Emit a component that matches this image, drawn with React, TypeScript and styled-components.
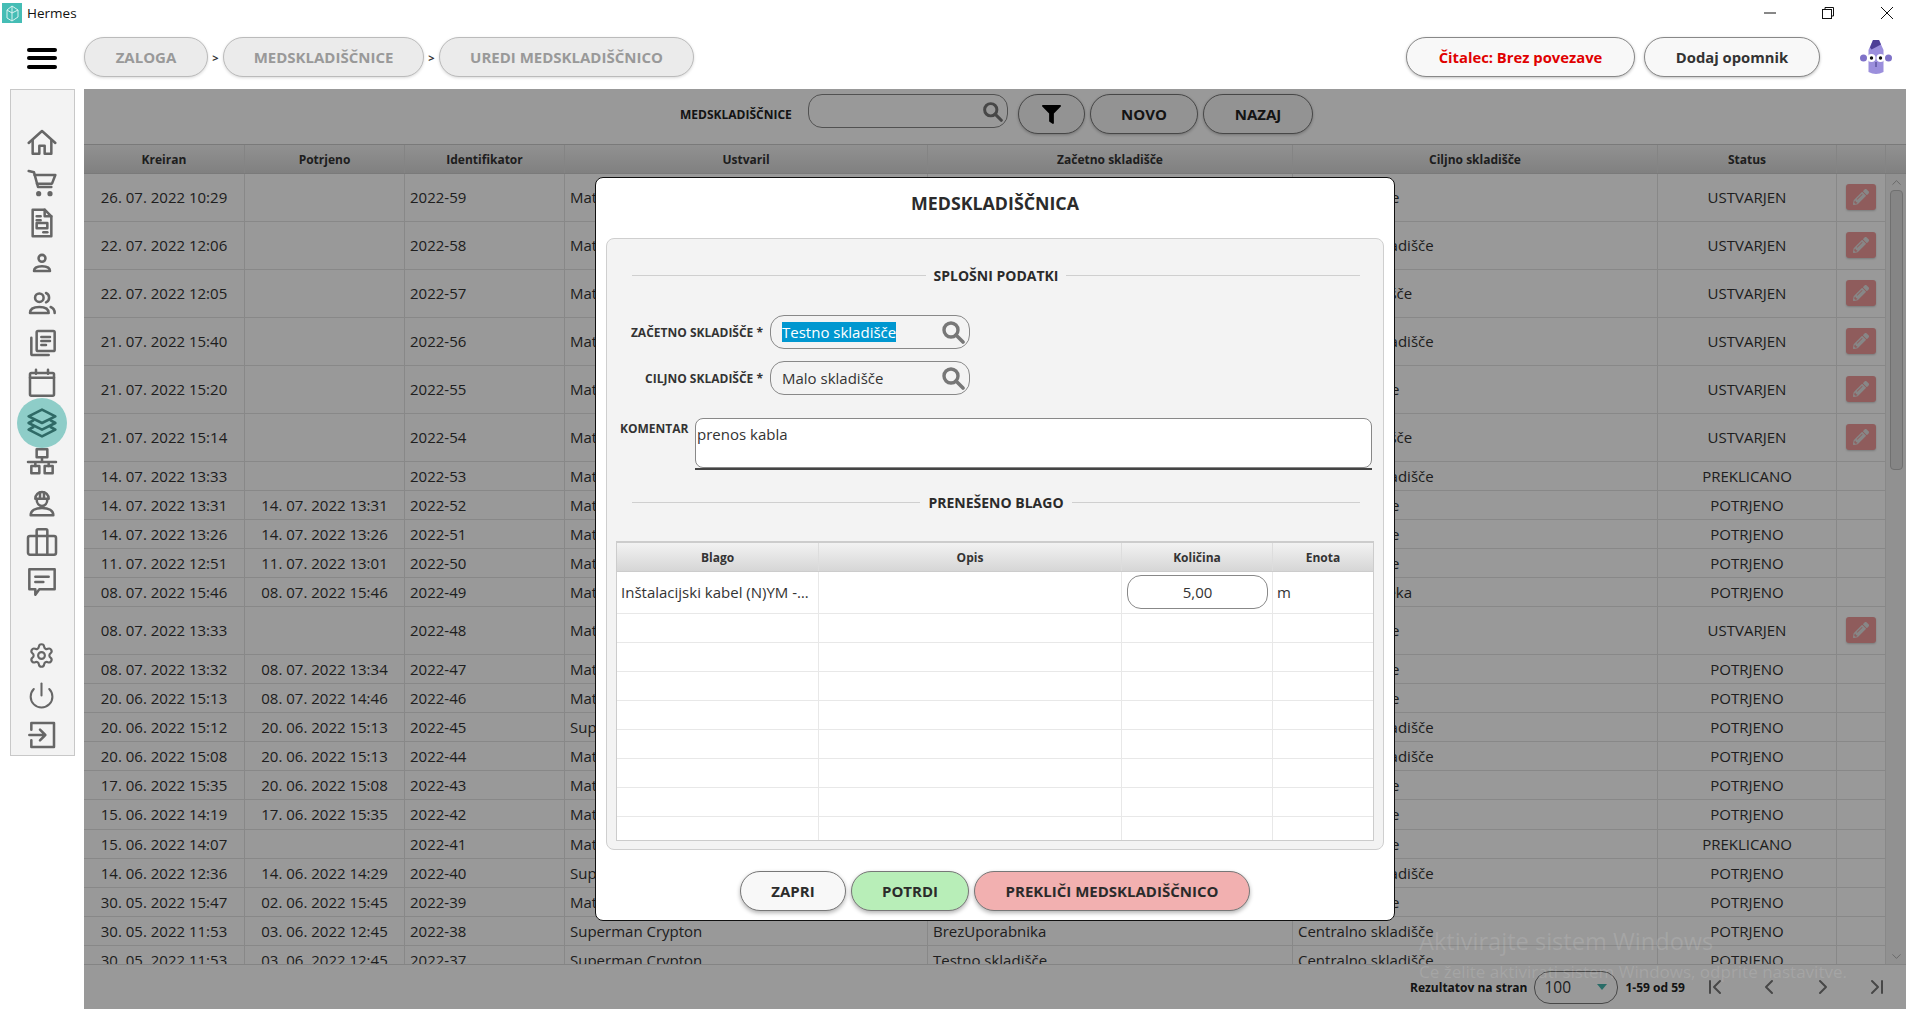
import React from "react";
import styled, { createGlobalStyle } from "styled-components";
import { ChevronDown, ChevronFirst, ChevronLast, ChevronLeft, ChevronRight, ChevronUp, Power, Settings } from "lucide-react";
import { FaFilter, FaPencilAlt } from "react-icons/fa";

const GlobalStyle = createGlobalStyle`
  html, body {
    margin: 0;
    padding: 0;
    background: #fff;
  }
  body {
    width: 1920px;
    height: 1026px;
    overflow: hidden;
    font-family: "Open Sans", "Liberation Sans", sans-serif;
    color: #333;
  }
  * {
    box-sizing: border-box;
  }
`;

const Page = styled.div`
  position: relative;
  width: 1920px;
  height: 1026px;
`;

const TitleBar = styled.div`
  display: flex;
  align-items: center;
  height: 30px;
  padding: 0 0 4px 2px;
  font-size: 13.5px;
  color: #111;
`;

const AppName = styled.span`
  margin-left: 5px;
`;

const WindowControls = styled.div`
  display: flex;
  margin-left: auto;
  width: 157px;
  justify-content: space-between;
  padding-right: 25px;
  align-items: center;
`;

const TopBar = styled.div`
  display: flex;
  align-items: center;
  height: 59px;
  padding: 7px 0 12px 27px;
`;

const Burger = styled.div`
  display: flex;
  flex-direction: column;
  gap: 4.5px;
  width: 30px;
  margin-right: 27px;
  margin-top: 2px;
  span {
    height: 4px;
    border-radius: 2px;
    background: #000;
  }
`;

const Crumb = styled.div<{ $w: number }>`
  display: flex;
  align-items: center;
  justify-content: center;
  height: 40px;
  border: 1px solid #bbb;
  border-radius: 20px;
  background: #ebebeb;
  box-shadow: 0 1px 3px rgba(0, 0, 0, 0.15);
  color: #999;
  font-size: 15px;
  font-weight: 700;
  width: ${(p) => p.$w}px;
`;

const CrumbSep = styled.span`
  width: 15px;
  text-align: center;
  font-size: 11px;
  font-weight: 700;
  color: #333;
`;

const TopActions = styled.div`
  display: flex;
  align-items: center;
  margin-left: auto;
`;

const Pill = styled.div<{ $w: number; $color?: string }>`
  display: flex;
  align-items: center;
  justify-content: center;
  height: 40px;
  width: ${(p) => p.$w}px;
  margin-right: 9px;
  border: 1px solid #888;
  border-radius: 20px;
  background: #f8f8f8;
  box-shadow: 0 1px 3px rgba(0, 0, 0, 0.25);
  font-size: 14.8px;
  font-weight: 700;
  color: ${(p) => p.$color || "#333"};
`;

const Mascot = styled.svg`
  margin: 0 28px 0 31px;
`;

const Main = styled.div`
  display: flex;
  align-items: flex-start;
`;

const Sidebar = styled.nav`
  display: flex;
  flex-direction: column;
  align-items: center;
  width: 65px;
  height: 667px;
  margin-left: 10px;
  padding: 33px 2px 0 0;
  border: 1px solid #c8c8c8;
  background: #f3f3f3;
`;

const NavSpacer = styled.div`
  height: 33px;
`;

const NavItem = styled.div<{ $active?: boolean }>`
  display: flex;
  align-items: center;
  justify-content: center;
  width: 50px;
  height: 40px;
  position: relative;
  color: ${(p) => (p.$active ? "#2f6a66" : "#666")};
  z-index: 0;
  &::before {
    content: "";
    display: ${(p) => (p.$active ? "block" : "none")};
    position: absolute;
    left: 0;
    top: -5px;
    width: 50px;
    height: 50px;
    border-radius: 50%;
    background: #8ecdc8;
    z-index: -1;
  }
`;

const NavSvg = styled.svg<{ $thick?: boolean }>`
  width: 32px;
  height: 32px;
  fill: none;
  stroke: currentColor;
  stroke-width: ${(p) => (p.$thick ? 2 : 1.9)};
  stroke-linejoin: round;
  stroke-linecap: round;
`;

const Panel = styled.section`
  position: relative;
  width: 1822px;
  height: 920px;
  margin-left: 9px;
  background: #fff;
`;

const Overlay = styled.div`
  position: absolute;
  inset: 0;
  background: rgba(0, 0, 0, 0.4);
`;

const Toolbar = styled.div`
  display: flex;
  align-items: flex-start;
  height: 55px;
  padding: 5px 0 0 596px;
`;

const ToolbarLabel = styled.span`
  width: 128px;
  margin-top: 12px;
  font-size: 12px;
  font-weight: 700;
  color: #222;
`;

const SearchField = styled.div<{ $w: number; $bg?: string }>`
  display: flex;
  align-items: center;
  justify-content: space-between;
  height: 34px;
  width: ${(p) => p.$w}px;
  padding: 0 4px 0 11px;
  border: 1px solid #888;
  border-radius: 14px;
  background: ${(p) => p.$bg || "#f3f3f3"};
  font-size: 15px;
  color: #333;
`;

const ToolGroup = styled.div`
  display: flex;
  gap: 5px;
  margin-left: 10px;
`;

const ToolButton = styled.div<{ $w: number }>`
  display: flex;
  align-items: center;
  justify-content: center;
  width: ${(p) => p.$w}px;
  height: 40px;
  border: 1px solid #777;
  border-radius: 20px;
  background: #f6f6f6;
  box-shadow: 0 1px 3px rgba(0, 0, 0, 0.25);
  font-size: 15px;
  font-weight: 700;
  color: #222;
`;

const HeaderRow = styled.div<{ $cols: string; $h: number }>`
  display: grid;
  grid-template-columns: ${(p) => p.$cols};
  height: ${(p) => p.$h}px;
  background: linear-gradient(#f2f2f2, #d6d6d6);
  border-top: 1px solid #ccc;
  border-bottom: 1px solid #ccc;
`;

const HeaderCell = styled.div`
  display: flex;
  align-items: center;
  justify-content: center;
  padding-top: 1px;
  border-right: 1px solid #ddd;
  font-size: 12px;
  font-weight: 700;
  color: #333;
  &:last-child {
    border-right: none;
  }
`;

const TableBody = styled.div`
  display: flex;
  height: 790px;
  overflow: hidden;
`;

const Rows = styled.div`
  width: 1802px;
`;

const RowBox = styled.div<{ $tall?: boolean }>`
  display: grid;
  grid-template-columns: 161px 160px 160px 363px 365px 365px 179px 49px;
  height: ${(p) => (p.$tall ? 48 : 29.05)}px;
  border-bottom: 1px solid #e3e3e3;
  && > * {
    padding-bottom: ${(p) => (p.$tall ? 2 : 0)}px;
  }
`;

const Cell = styled.div<{ $center?: boolean }>`
  display: flex;
  align-items: center;
  justify-content: ${(p) => (p.$center ? "center" : "flex-start")};
  padding: ${(p) => (p.$center ? "0" : "0 5px")};
  border-right: 1px solid #e3e3e3;
  font-size: 15px;
  white-space: nowrap;
  overflow: hidden;
  color: #333;
`;

const EditButton = styled.div`
  display: flex;
  align-items: center;
  justify-content: center;
  width: 30px;
  height: 26px;
  border-radius: 3px;
  background: #ef9a9a;
  box-shadow: 0 1px 2px rgba(0, 0, 0, 0.2);
  color: #e2e2e2;
`;

const Scrollbar = styled.div`
  display: flex;
  flex-direction: column;
  align-items: center;
  width: 20px;
  background: #f2f2f2;
  color: #888;
`;

const ScrollArrow = styled.div`
  display: flex;
  align-items: center;
  justify-content: center;
  height: 16px;
`;

const ScrollThumb = styled.div`
  width: 13px;
  height: 280px;
  margin-bottom: auto;
  border: 1px solid #bbb;
  border-radius: 4px;
  background: #dedede;
`;

const Footer = styled.div`
  display: flex;
  align-items: center;
  height: 45px;
  padding-left: 1326px;
  border-top: 1px solid #ddd;
  font-size: 12px;
  font-weight: 700;
  color: #222;
`;

const PageSelect = styled.div`
  display: flex;
  align-items: center;
  justify-content: space-between;
  width: 84px;
  height: 33px;
  margin: 0 7px;
  padding: 0 10px 0 9px;
  border: 1px solid #777;
  border-radius: 16px;
  font-size: 15.5px;
  font-weight: 400;
  color: #333;
`;

const Triangle = styled.span`
  width: 0;
  height: 0;
  border-left: 5px solid transparent;
  border-right: 5px solid transparent;
  border-top: 6px solid #45b5ac;
`;

const Pager = styled.div`
  display: flex;
  align-items: center;
  gap: 30px;
  margin-left: 18px;
  color: #777;
`;

const Modal = styled.div`
  position: absolute;
  left: 511px;
  top: 88px;
  width: 800px;
  height: 744px;
  padding-left: 10px;
  border: 1px solid #111;
  border-radius: 8px;
  background: #fff;
`;

const ModalTitle = styled.h2`
  display: flex;
  align-items: center;
  justify-content: center;
  height: 60px;
  margin: 0;
  padding: 0 10px 10px 0;
  font-size: 17.8px;
  font-weight: 700;
  color: #2b2b2b;
`;

const FormPanel = styled.div`
  width: 778px;
  height: 612px;
  padding: 0 9px;
  border: 1px solid #cfcfcf;
  border-radius: 8px;
  background: #f3f3f3;
`;

const SectionTitle = styled.div<{ $top: number }>`
  display: flex;
  align-items: center;
  gap: 8px;
  height: 20px;
  margin: ${(p) => p.$top}px 14px 0 16px;
  font-size: 14px;
  font-weight: 700;
  color: #2b2b2b;
  &::before,
  &::after {
    content: "";
    flex: 1;
    height: 1px;
    background: #cfcfcf;
  }
`;

const FormRow = styled.div<{ $top: number }>`
  display: flex;
  align-items: center;
  margin-top: ${(p) => p.$top}px;
`;

const FieldLabel = styled.label`
  width: 147px;
  margin-right: 7px;
  text-align: right;
  font-size: 12px;
  font-weight: 700;
  color: #333;
  white-space: nowrap;
`;

const Selected = styled.span`
  background: #0097d0;
  color: #fff;
`;

const CommentRow = styled.div`
  display: flex;
  align-items: flex-start;
  margin-top: 23px;
  padding-left: 4px;
`;

const CommentLabel = styled.label`
  width: 75px;
  padding-top: 2px;
  font-size: 12px;
  font-weight: 700;
  line-height: 18px;
  color: #333;
`;

const CommentWrap = styled.div`
  width: 677px;
  height: 52px;
  border-bottom: 2px solid #444;
`;

const CommentBox = styled.div`
  height: 50px;
  padding: 6px 1px;
  border: 1px solid #888;
  border-radius: 8px;
  background: #fff;
  font-size: 15px;
  line-height: 18px;
  color: #333;
`;

const ItemTable = styled.div`
  width: 758px;
  height: 300px;
  margin-top: 29px;
  border: 1px solid #ccc;
  background: #fff;
  overflow: hidden;
`;

const ItemRow = styled.div<{ $h: number }>`
  display: grid;
  grid-template-columns: 202px 303px 151px 100px;
  height: ${(p) => p.$h}px;
  border-bottom: 1px solid #e8e8e8;
`;

const ItemCell = styled.div`
  display: flex;
  align-items: center;
  min-width: 0;
  padding: 0 4px 2px;
  border-right: 1px solid #e8e8e8;
  font-size: 15px;
  color: #333;
  &:last-child {
    border-right: none;
  }
`;

const Ellipsis = styled.span`
  max-width: 188px;
  overflow: hidden;
  white-space: nowrap;
  text-overflow: ellipsis;
`;

const QtyInput = styled.div`
  display: flex;
  align-items: center;
  justify-content: center;
  width: 142px;
  height: 34px;
  margin-left: 1px;
  border: 1px solid #888;
  border-radius: 14px;
  background: #fff;
`;

const ModalActions = styled.div`
  display: flex;
  gap: 5px;
  margin: 21px 0 0 134px;
`;

const ModalButton = styled.div<{ $w: number; $bg: string }>`
  display: flex;
  align-items: center;
  justify-content: center;
  width: ${(p) => p.$w}px;
  height: 40px;
  border: 1px solid #777;
  border-radius: 20px;
  background: ${(p) => p.$bg};
  box-shadow: 0 2px 4px rgba(0, 0, 0, 0.3);
  font-size: 15px;
  font-weight: 700;
  color: #2b2b2b;
`;

const Watermark = styled.div`
  position: absolute;
  left: 1419px;
  top: 924px;
  color: rgba(255, 255, 255, 0.13);
  pointer-events: none;
  white-space: nowrap;
`;

const WatermarkTitle = styled.div`
  font-size: 23.6px;
  line-height: 34px;
`;

const WatermarkText = styled.div`
  margin-top: 4px;
  font-size: 17px;
  line-height: 20px;
`;

const SearchGlyph: React.FC<{ size?: number }> = ({ size = 24 }) => (
  <svg width={size} height={size} viewBox="0 0 24 24" fill="none" stroke="#777">
    <circle cx="10" cy="10" r="7" strokeWidth="3.4" />
    <path d="M15 15l7 7" strokeWidth="3.6" strokeLinecap="round" />
  </svg>
);

const navIcons: React.ReactNode[] = [
  <NavSvg viewBox="0 0 24 24"><path d="M2 12l10-9 10 9" /><path d="M5 10v10h5v-6h4v6h5V10" /></NavSvg>,
  <NavSvg viewBox="0 0 24 24"><path d="M2 3l4 1 3 11h10" /><path d="M6.500 6H22l-2.500 6.500H8.200" /><circle cx="9.500" cy="20" r="1" /><circle cx="18" cy="20" r="1" /></NavSvg>,
  <NavSvg viewBox="0 0 24 24"><path d="M5 2h9l5 5v15H5z" /><path d="M14 2v5h5" /><path d="M8 7h3M8 10h3" /><rect x="8" y="12" width="8" height="4" /><path d="M13 19h3" /></NavSvg>,
  <NavSvg viewBox="0 0 24 24"><circle cx="12" cy="8.500" r="2.600" /><path d="M6 18c0-2.500 2.500-3.600 6-3.600s6 1.100 6 3.600z" /></NavSvg>,
  <NavSvg viewBox="0 0 24 24"><circle cx="10" cy="8" r="3.200" /><path d="M15 4.500a3.800 3.800 0 0 1 0 7" /><path d="M3 19.500c0-3 3-4.500 7-4.500s7 1.500 7 4.500z" /><path d="M18.500 15c2 .8 3 2.300 3 4.500" /></NavSvg>,
  <NavSvg viewBox="0 0 24 24"><rect x="8" y="3" width="13.500" height="15" rx="1" /><path d="M11.500 7.500h6.500M11.500 10.500h6.500M11.500 13.500h3.500" /><path d="M4 8v12a1 1 0 0 0 1 1h12" /></NavSvg>,
  <NavSvg viewBox="0 0 24 24"><rect x="3" y="4.500" width="18" height="17" rx="1" /><path d="M7.500 2v3M16.500 2v3M3 8h18" /></NavSvg>,
  <NavSvg viewBox="0 0 24 24" $thick><path d="M12 2l10 5-10 5L2 7z" /><path d="M5.500 10L2 12l10 5 10-5-3.500-2" /><path d="M5.500 15L2 17l10 5 10-5-3.500-2" /></NavSvg>,
  <NavSvg viewBox="0 0 24 24"><rect x="8" y="2.500" width="8" height="6" /><path d="M12 8.500V12M1.500 12h21M7 12v3M17 12v3" /><rect x="4" y="15" width="6" height="5.500" /><rect x="14" y="15" width="6" height="5.500" /></NavSvg>,
  <NavSvg viewBox="0 0 24 24"><path d="M7 9.500a5 5 0 0 1 10 0z" /><path d="M10.500 4.800v4.700M13.500 4.800v4.700" /><path d="M8 10c0 3 1.800 5 4 5s4-2 4-5" /><path d="M3.500 22c0-3.500 3.500-5.500 8.500-5.500s8.500 2 8.500 5.500z" /></NavSvg>,
  <NavSvg viewBox="0 0 24 24"><rect x="1.500" y="7.500" width="21" height="14" rx="1.500" /><path d="M8 7.500V3.500a1 1 0 0 1 1-1h6a1 1 0 0 1 1 1v4" /><path d="M8 7.500v14M16 7.500v14" /></NavSvg>,
  <NavSvg viewBox="0 0 24 24"><path d="M2.500 2.500h19v15H10L7 21.500v-4H2.500z" /><path d="M7 8h10M7 12h6" /></NavSvg>,
];

const bottomIcons: React.ReactNode[] = [
  <Settings size={27} strokeWidth={1.9} />,
  <Power size={29} strokeWidth={1.7} />,
  <NavSvg viewBox="0 0 24 24"><path d="M4 8V3h17v18H4v-5" /><path d="M2.500 12h12M10.500 8l4 4-4 4" /></NavSvg>,
];

type Transfer = {
  created: string;
  confirmed?: string;
  id: string;
  author: string;
  source: string;
  target: string;
  status: string;
  editable?: boolean;
};

const MAT = "Matej Kovač";
const SUP = "Superman Crypton";
const TEST = "Testno skladišče";
const MALO = "Malo skladišče";
const CENTER = "Centralno skladišče";

const transfers: Transfer[] = [
  { created: "26. 07. 2022 10:29", id: "2022-59", author: MAT, source: TEST, target: MALO, status: "USTVARJEN", editable: true },
  { created: "22. 07. 2022 12:06", id: "2022-58", author: MAT, source: TEST, target: CENTER, status: "USTVARJEN", editable: true },
  { created: "22. 07. 2022 12:05", id: "2022-57", author: MAT, source: MALO, target: TEST, status: "USTVARJEN", editable: true },
  { created: "21. 07. 2022 15:40", id: "2022-56", author: MAT, source: TEST, target: CENTER, status: "USTVARJEN", editable: true },
  { created: "21. 07. 2022 15:20", id: "2022-55", author: MAT, source: TEST, target: MALO, status: "USTVARJEN", editable: true },
  { created: "21. 07. 2022 15:14", id: "2022-54", author: MAT, source: MALO, target: TEST, status: "USTVARJEN", editable: true },
  { created: "14. 07. 2022 13:33", id: "2022-53", author: MAT, source: TEST, target: CENTER, status: "PREKLICANO" },
  { created: "14. 07. 2022 13:31", confirmed: "14. 07. 2022 13:31", id: "2022-52", author: MAT, source: TEST, target: MALO, status: "POTRJENO" },
  { created: "14. 07. 2022 13:26", confirmed: "14. 07. 2022 13:26", id: "2022-51", author: MAT, source: TEST, target: MALO, status: "POTRJENO" },
  { created: "11. 07. 2022 12:51", confirmed: "11. 07. 2022 13:01", id: "2022-50", author: MAT, source: TEST, target: MALO, status: "POTRJENO" },
  { created: "08. 07. 2022 15:46", confirmed: "08. 07. 2022 15:46", id: "2022-49", author: MAT, source: TEST, target: "Skladišče Janeka", status: "POTRJENO" },
  { created: "08. 07. 2022 13:33", id: "2022-48", author: MAT, source: TEST, target: MALO, status: "USTVARJEN", editable: true },
  { created: "08. 07. 2022 13:32", confirmed: "08. 07. 2022 13:34", id: "2022-47", author: MAT, source: TEST, target: MALO, status: "POTRJENO" },
  { created: "20. 06. 2022 15:13", confirmed: "08. 07. 2022 14:46", id: "2022-46", author: MAT, source: TEST, target: MALO, status: "POTRJENO" },
  { created: "20. 06. 2022 15:12", confirmed: "20. 06. 2022 15:13", id: "2022-45", author: SUP, source: TEST, target: CENTER, status: "POTRJENO" },
  { created: "20. 06. 2022 15:08", confirmed: "20. 06. 2022 15:13", id: "2022-44", author: MAT, source: TEST, target: CENTER, status: "POTRJENO" },
  { created: "17. 06. 2022 15:35", confirmed: "20. 06. 2022 15:08", id: "2022-43", author: MAT, source: TEST, target: MALO, status: "POTRJENO" },
  { created: "15. 06. 2022 14:19", confirmed: "17. 06. 2022 15:35", id: "2022-42", author: MAT, source: TEST, target: MALO, status: "POTRJENO" },
  { created: "15. 06. 2022 14:07", id: "2022-41", author: MAT, source: TEST, target: MALO, status: "PREKLICANO" },
  { created: "14. 06. 2022 12:36", confirmed: "14. 06. 2022 14:29", id: "2022-40", author: SUP, source: TEST, target: CENTER, status: "POTRJENO" },
  { created: "30. 05. 2022 15:47", confirmed: "02. 06. 2022 15:45", id: "2022-39", author: MAT, source: TEST, target: MALO, status: "POTRJENO" },
  { created: "30. 05. 2022 11:53", confirmed: "03. 06. 2022 12:45", id: "2022-38", author: SUP, source: "BrezUporabnika", target: CENTER, status: "POTRJENO" },
  { created: "30. 05. 2022 11:53", confirmed: "03. 06. 2022 12:45", id: "2022-37", author: SUP, source: TEST, target: CENTER, status: "POTRJENO" },
];

const mainCols = "161px 160px 160px 363px 365px 365px 179px 49px 20px";
const mainHeads = ["Kreiran", "Potrjeno", "Identifikator", "Ustvaril", "Začetno skladišče", "Ciljno skladišče", "Status", "", ""];

const App: React.FC = () => {
  return (
    <Page>
      <GlobalStyle />
      <TitleBar>
        <svg width="20" height="20" viewBox="0 0 20 20">
          <rect width="20" height="20" fill="#45bdb5" />
          <path d="M10 3l6 4v7l-6 4-5-3V7zM10 3v15M5 7l5 3 6-3" fill="none" stroke="#d8f2f0" strokeWidth="1" />
        </svg>
        <AppName>Hermes</AppName>
        <WindowControls>
          <svg width="14" height="14" viewBox="0 0 14 14"><path d="M1 7h12" stroke="#111" /></svg>
          <svg width="14" height="14" viewBox="0 0 14 14" fill="none" stroke="#111"><rect x="1.500" y="3.500" width="9" height="9" /><path d="M4 3.500V1.500h8.500V10h-2" /></svg>
          <svg width="16" height="16" viewBox="0 0 16 16"><path d="M2 2l12 12M14 2L2 14" stroke="#111" /></svg>
        </WindowControls>
      </TitleBar>
      <TopBar>
        <Burger>
          <span />
          <span />
          <span />
        </Burger>
        <Crumb $w={124}>ZALOGA</Crumb>
        <CrumbSep>&gt;</CrumbSep>
        <Crumb $w={201}>MEDSKLADIŠČNICE</Crumb>
        <CrumbSep>&gt;</CrumbSep>
        <Crumb $w={255}>UREDI MEDSKLADIŠČNICO</Crumb>
        <TopActions>
          <Pill $w={229} $color="#e00000">Čitalec: Brez povezave</Pill>
          <Pill $w={176}>Dodaj opomnik</Pill>
          <Mascot width="32" height="38" viewBox="0 0 32 38">
            <path d="M8.500 12L13 2h6l4.500 10v22q-7.500 4-15 0z" fill="#9b8fdc" />
            <path d="M13 2h6l2 4.500-9.500 5-1.500-2z" fill="#4d3f96" />
            <circle cx="3.500" cy="20" r="3.500" fill="#7f72c8" />
            <circle cx="28.500" cy="20" r="3.500" fill="#7f72c8" />
            <circle cx="11.500" cy="20" r="4" fill="#fff" />
            <circle cx="20.500" cy="20" r="4" fill="#fff" />
            <circle cx="11.500" cy="20" r="1.700" fill="#111" />
            <circle cx="20.500" cy="20" r="1.700" fill="#111" />
            <path d="M16 24v5" stroke="#3f3680" strokeWidth="1" />
          </Mascot>
        </TopActions>
      </TopBar>
      <Main>
        <Sidebar>
          {navIcons.map((icon, i) => (
            <NavItem key={i} $active={i === 7}>{icon}</NavItem>
          ))}
          <NavSpacer />
          {bottomIcons.map((icon, i) => (
            <NavItem key={i}>{icon}</NavItem>
          ))}
        </Sidebar>
        <Panel>
          <Toolbar>
            <ToolbarLabel>MEDSKLADIŠČNICE</ToolbarLabel>
            <SearchField $w={200} $bg="#fff">
              <span />
              <SearchGlyph size={21} />
            </SearchField>
            <ToolGroup>
              <ToolButton $w={67}><FaFilter size={19} color="#000" /></ToolButton>
              <ToolButton $w={108}>NOVO</ToolButton>
              <ToolButton $w={110}>NAZAJ</ToolButton>
            </ToolGroup>
          </Toolbar>
          <HeaderRow $cols={mainCols} $h={30}>
            {mainHeads.map((h, i) => (
              <HeaderCell key={i}>{h}</HeaderCell>
            ))}
          </HeaderRow>
          <TableBody>
            <Rows>
              {transfers.map((t) => (
                <RowBox key={t.id} $tall={t.editable}>
                  <Cell $center>{t.created}</Cell>
                  <Cell $center>{t.confirmed}</Cell>
                  <Cell>{t.id}</Cell>
                  <Cell>{t.author}</Cell>
                  <Cell>{t.source}</Cell>
                  <Cell>{t.target}</Cell>
                  <Cell $center>{t.status}</Cell>
                  <Cell $center>
                    {t.editable && (
                      <EditButton><FaPencilAlt size={16} /></EditButton>
                    )}
                  </Cell>
                </RowBox>
              ))}
            </Rows>
            <Scrollbar>
              <ScrollArrow><ChevronUp size={15} strokeWidth={1} /></ScrollArrow>
              <ScrollThumb />
              <ScrollArrow><ChevronDown size={15} strokeWidth={1} /></ScrollArrow>
            </Scrollbar>
          </TableBody>
          <Footer>
            <span>Rezultatov na stran</span>
            <PageSelect>100<Triangle /></PageSelect>
            <span>1-59 od 59</span>
            <Pager>
              <ChevronFirst size={24} strokeWidth={2} />
              <ChevronLeft size={24} strokeWidth={2} />
              <ChevronRight size={24} strokeWidth={2} />
              <ChevronLast size={24} strokeWidth={2} />
            </Pager>
          </Footer>
          <Overlay />
          <Modal>
            <ModalTitle>MEDSKLADIŠČNICA</ModalTitle>
            <FormPanel>
              <SectionTitle $top={26}>SPLOŠNI PODATKI</SectionTitle>
              <FormRow $top={30}>
                <FieldLabel>ZAČETNO SKLADIŠČE *</FieldLabel>
                <SearchField $w={200}>
                  <Selected>Testno skladišče</Selected>
                  <SearchGlyph />
                </SearchField>
              </FormRow>
              <FormRow $top={12}>
                <FieldLabel>CILJNO SKLADIŠČE *</FieldLabel>
                <SearchField $w={200}>
                  <span>Malo skladišče</span>
                  <SearchGlyph />
                </SearchField>
              </FormRow>
              <CommentRow>
                <CommentLabel>KOMENTAR</CommentLabel>
                <CommentWrap>
                  <CommentBox>prenos kabla</CommentBox>
                </CommentWrap>
              </CommentRow>
              <SectionTitle $top={22}>PRENEŠENO BLAGO</SectionTitle>
              <ItemTable>
                <HeaderRow $cols="202px 303px 151px 100px" $h={30}>
                  <HeaderCell>Blago</HeaderCell>
                  <HeaderCell>Opis</HeaderCell>
                  <HeaderCell>Količina</HeaderCell>
                  <HeaderCell>Enota</HeaderCell>
                </HeaderRow>
                <ItemRow $h={42}>
                  <ItemCell><Ellipsis>Inštalacijski kabel (N)YM - J 3x1,5</Ellipsis></ItemCell>
                  <ItemCell />
                  <ItemCell><QtyInput>5,00</QtyInput></ItemCell>
                  <ItemCell>m</ItemCell>
                </ItemRow>
                {Array.from({ length: 8 }, (_, i) => (
                  <ItemRow key={i} $h={29}>
                    <ItemCell />
                    <ItemCell />
                    <ItemCell />
                    <ItemCell />
                  </ItemRow>
                ))}
              </ItemTable>
            </FormPanel>
            <ModalActions>
              <ModalButton $w={106} $bg="#f8f8f8">ZAPRI</ModalButton>
              <ModalButton $w={118} $bg="#b8eeb8">POTRDI</ModalButton>
              <ModalButton $w={276} $bg="#f2b0b0">PREKLIČI MEDSKLADIŠČNICO</ModalButton>
            </ModalActions>
          </Modal>
        </Panel>
      </Main>
      <Watermark>
        <WatermarkTitle>Aktivirajte sistem Windows</WatermarkTitle>
        <WatermarkText>Če želite aktivirati sistem Windows, odprite nastavitve.</WatermarkText>
      </Watermark>
    </Page>
  );
};

export default App;
